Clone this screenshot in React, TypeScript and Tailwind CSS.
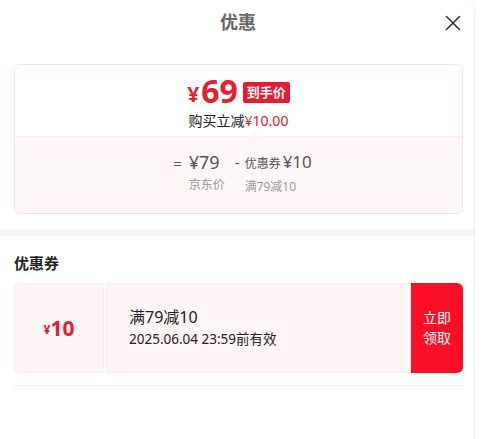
import React from "react";

export default function App() {
  const font = { fontFamily: '"Noto Sans", "Noto Sans CJK SC", sans-serif' };
  return (
    <div className="w-[481px] h-[439px] bg-white flex" style={font}>
      <div className="w-[475px] h-full bg-white rounded-tr-[10px] border-r border-[#eeeeee] flex flex-col">
        {/* Header */}
        <div className="relative h-[44px] flex items-center justify-center">
          <span className="text-[18px] font-bold text-[#666666] leading-none ml-[2px]">优惠</span>
          <svg className="absolute left-[445px] top-[15px]" width="16" height="16" viewBox="0 0 16 16" fill="none">
            <path d="M1.5 1.5 L14.5 14.5 M14.5 1.5 L1.5 14.5" stroke="#333" strokeWidth="1.6" strokeLinecap="round" />
          </svg>
        </div>

        {/* Price card */}
        <div className="ml-[14px] mr-[11px] mt-[20px] rounded-[6px] border border-[#f6e3e3] overflow-hidden">
          <div className="h-[71px] bg-white flex flex-col items-center pt-[10px] relative">
            <div className="flex items-center h-[32px]">
              <span className="text-[#e3202d] font-bold text-[21px] leading-none mt-[6px]">¥</span>
              <span className="text-[#e3202d] font-bold text-[32px] leading-none ml-[2px]">69</span>
              <span className="ml-[5px] bg-[#e81c30] text-white font-bold text-[13px] leading-none px-[4px] py-[4px] rounded-[2px] mt-[2px]">到手价</span>
            </div>
            <div className="mt-[7px] text-[14px] leading-none text-[#222]">
              购买立减<span className="text-[#e3202d]">¥10.00</span>
            </div>
            <div className="absolute left-[234px] bottom-[-1px] w-0 h-0 border-l-[5px] border-r-[5px] border-b-[5px] border-l-transparent border-r-transparent border-b-[#fdf7f7]" />
          </div>
          <div className="h-[77px] bg-[#fdf7f7] border-t border-[#f8eeee] flex justify-center pt-[14px]">
            <div className="flex items-start ml-[8px]">
              <span className="text-[15px] text-[#555] leading-[22px] mt-[1px]">=</span>
              <div className="flex flex-col items-start ml-[7px]">
                <span className="text-[18px] text-[#555] leading-[22px]">¥79</span>
                <span className="text-[12px] text-[#999] leading-none mt-[6px]">京东价</span>
              </div>
              <span className="text-[15px] text-[#555] leading-[22px] ml-[10px]">-</span>
              <div className="flex flex-col items-start ml-[5px]">
                <div className="flex items-baseline">
                  <span className="text-[12px] text-[#555] leading-[22px]">优惠券</span>
                  <span className="text-[17px] text-[#555] leading-[22px] ml-[2px]">¥10</span>
                </div>
                <span className="text-[12px] text-[#999] leading-none mt-[6px]">满79减10</span>
              </div>
            </div>
          </div>
        </div>

        {/* Separator */}
        <div className="mt-[15px] h-[7px] bg-[#f5f5f7]" />

        {/* Coupons */}
        <div className="pl-[14px] pr-[11px] pt-[20px]">
          <div className="text-[15px] font-bold text-[#222] leading-none">优惠券</div>
          <div className="mt-[12px] h-[90px] flex">
            <div className="w-[90px] bg-[#fdf5f6] border border-[#f8ecee] rounded-l-[6px] flex items-center justify-center">
              <span className="text-[#e3202d] font-bold text-[12px] leading-none mt-[4px]">¥</span>
              <span className="text-[#e3202d] font-bold text-[21px] leading-none">10</span>
            </div>
            <div className="w-[2px] bg-white" />
            <div className="flex-1 bg-[#fdf5f6] border border-[#f8ecee] border-r-0 flex flex-col justify-center pl-[22px]">
              <span className="text-[16px] text-[#222] leading-none">满79减10</span>
              <span className="text-[13.5px] text-[#222] leading-none mt-[8px]">2025.06.04 23:59前有效</span>
            </div>
            <div className="w-[52px] bg-[#fb0f27] rounded-r-[6px] flex flex-col items-center justify-center">
              <span className="text-white text-[14px] leading-[20px]">立即</span>
              <span className="text-white text-[14px] leading-[20px]">领取</span>
            </div>
          </div>
          <div className="mt-[12px] h-px bg-[#f0f0f0]" />
        </div>
      </div>
    </div>
  );
}
